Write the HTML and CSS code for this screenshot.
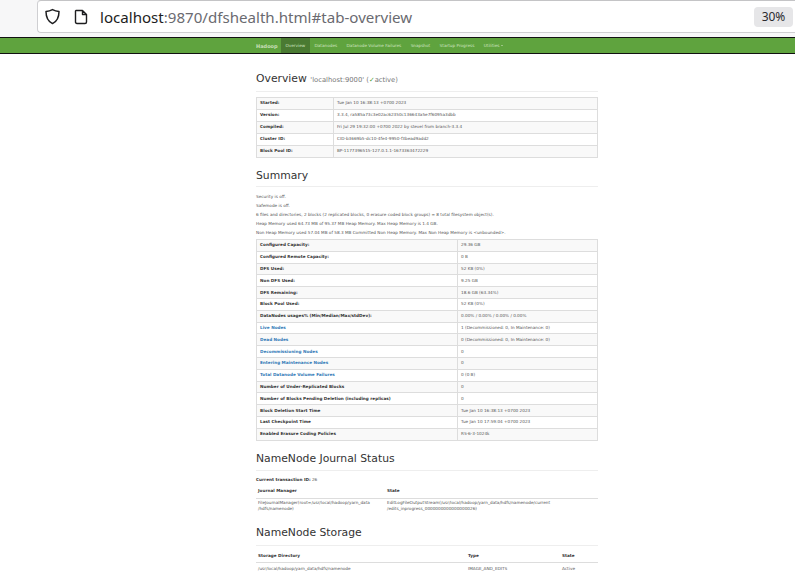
FILE: index.html
```html
<!DOCTYPE html>
<html lang="en">
<head>
  <meta charset="UTF-8">
  <title>Namenode information</title>
  <link rel="stylesheet" href="styles.css">
</head>
<body>

  <!-- BROWSER ADDRESS BAR -->
  <div class="browser-bar">
    <div class="url-box">
      <svg class="shield" width="17" height="17" viewBox="0 0 17 17"><path d="M8.5 1.6 C6.4 2.8 4.2 3.3 2 3.4 C2 9 3.4 13 8.5 15.6 C13.6 13 15 9 15 3.4 C12.8 3.3 10.6 2.8 8.5 1.6 Z" fill="none" stroke="#1d1d1f" stroke-width="1.5" stroke-linejoin="round"/></svg>
      <svg class="page" width="14" height="16" viewBox="0 0 14 16"><path d="M2 1.5 H8.5 L12.5 5.5 V13 Q12.5 14.5 11 14.5 H3 Q1.5 14.5 1.5 13 V2 Z M8.5 1.5 V5.5 H12.5" fill="none" stroke="#1d1d1f" stroke-width="1.4" stroke-linejoin="round"/></svg>
      <div class="url"><span class="host">localhost</span>:9870/dfshealth.html#tab-overview</div>
      <div class="zoom-badge">30%</div>
    </div>
  </div>

  <!-- NAVBAR -->
  <div class="navbar">
    <div class="nav-inner">
      <span class="brand">Hadoop</span>
      <a class="nav-link active">Overview</a>
      <a class="nav-link">Datanodes</a>
      <a class="nav-link">Datanode Volume Failures</a>
      <a class="nav-link">Snapshot</a>
      <a class="nav-link">Startup Progress</a>
      <a class="nav-link">Utilities <span class="caret"></span></a>
    </div>
  </div>

  <div class="container">

    <div class="page-header overview-head">
      <h1>Overview <small>'localhost:9000' (<span class="check">&#10003;</span>active)</small></h1>
    </div>
    <table class="grid overview">
      <tr><th>Started:</th><td>Tue Jan 10 16:38:13 +0700 2023</td></tr>
      <tr><th>Version:</th><td>3.3.4, ra585a73c3e02ac62350c136643a5e7f6095a3dbb</td></tr>
      <tr><th>Compiled:</th><td>Fri Jul 29 19:32:00 +0700 2022 by stevel from branch-3.3.4</td></tr>
      <tr><th>Cluster ID:</th><td>CID-b3669b5-dc10-4fe4-9950-f3bead9add2</td></tr>
      <tr><th>Block Pool ID:</th><td>BP-1177396515-127.0.1.1-1673363472229</td></tr>
    </table>

    <div class="page-header summary-head">
      <h1>Summary</h1>
    </div>
    <p>Security is off.</p>
    <p>Safemode is off.</p>
    <p>6 files and directories, 2 blocks (2 replicated blocks, 0 erasure coded block groups) = 8 total filesystem object(s).</p>
    <p>Heap Memory used 64.73 MB of 95.37 MB Heap Memory. Max Heap Memory is 1.4 GB.</p>
    <p>Non Heap Memory used 57.04 MB of 58.3 MB Committed Non Heap Memory. Max Non Heap Memory is &lt;unbounded&gt;.</p>
    <table class="grid summary">
      <tr><th>Configured Capacity:</th><td>29.36 GB</td></tr>
      <tr><th>Configured Remote Capacity:</th><td>0 B</td></tr>
      <tr><th>DFS Used:</th><td>52 KB (0%)</td></tr>
      <tr><th>Non DFS Used:</th><td>9.25 GB</td></tr>
      <tr><th>DFS Remaining:</th><td>18.6 GB (63.34%)</td></tr>
      <tr><th>Block Pool Used:</th><td>52 KB (0%)</td></tr>
      <tr><th>DataNodes usages% (Min/Median/Max/stdDev):</th><td>0.00% / 0.00% / 0.00% / 0.00%</td></tr>
      <tr><th><a>Live Nodes</a></th><td>1 (Decommissioned: 0, In Maintenance: 0)</td></tr>
      <tr><th><a>Dead Nodes</a></th><td>0 (Decommissioned: 0, In Maintenance: 0)</td></tr>
      <tr><th><a>Decommissioning Nodes</a></th><td>0</td></tr>
      <tr><th><a>Entering Maintenance Nodes</a></th><td>0</td></tr>
      <tr><th><a>Total Datanode Volume Failures</a></th><td>0 (0 B)</td></tr>
      <tr><th>Number of Under-Replicated Blocks</th><td>0</td></tr>
      <tr><th>Number of Blocks Pending Deletion (including replicas)</th><td>0</td></tr>
      <tr><th>Block Deletion Start Time</th><td>Tue Jan 10 16:38:13 +0700 2023</td></tr>
      <tr><th>Last Checkpoint Time</th><td>Tue Jan 10 17:59:04 +0700 2023</td></tr>
      <tr><th>Enabled Erasure Coding Policies</th><td>RS-6-3-1024k</td></tr>
    </table>

    <div class="page-header journal-head">
      <h1>NameNode Journal Status</h1>
    </div>
    <p class="txid"><b>Current transaction ID:</b> 26</p>
    <table class="plain journal">
      <tr><th>Journal Manager</th><th>State</th></tr>
      <tr>
        <td>FileJournalManager(root=/usr/local/hadoop/yarn_data<br>/hdfs/namenode)</td>
        <td>EditLogFileOutputStream(/usr/local/hadoop/yarn_data/hdfs/namenode/current<br>/edits_inprogress_0000000000000000026)</td>
      </tr>
    </table>

    <div class="page-header storage-head">
      <h1>NameNode Storage</h1>
    </div>
    <table class="plain storage">
      <tr><th>Storage Directory</th><th>Type</th><th>State</th></tr>
      <tr><td>/usr/local/hadoop/yarn_data/hdfs/namenode</td><td>IMAGE_AND_EDITS</td><td>Active</td></tr>
    </table>

  </div>
</body>
</html>
```

FILE: styles.css
```css
/* page is a 30% zoomed bootstrap layout, so everything is tiny */
html, body {
  height: 100%;
}

body {
  margin: 0;
  background: #fff;
  color: #555;
  font-family: "DejaVu Sans", sans-serif;
  font-size: 4.2px;
  line-height: 6px;
  overflow: hidden;
}

/* BROWSER BAR */
.browser-bar {
  height: 37px;
  padding-left: 37px;
  background: #f7f7f8;
  box-sizing: border-box;
}

.url-box {
  height: 33px;
  display: flex;
  align-items: center;
  background: #fff;
  border: 1px solid #cfcfd2;
  border-top-color: #c4c4c6;
  border-right: 0;
  border-radius: 4px 0 0 4px;
  box-sizing: border-box;
}

.shield {
  margin-left: 6px;
}

.page {
  margin-left: 13px;
}

.url {
  margin-left: 12px;
  font-family: "Noto Sans", sans-serif;
  font-size: 15.1px;
  line-height: 20px;
  color: #6a6a70;
  flex: 1;
}

.host {
  color: #1d1d22;
}

.zoom-badge {
  width: 39px;
  height: 20px;
  margin-right: 2px;
  border-radius: 4px;
  background: #e6e6e8;
  color: #2a2a2e;
  font-family: "Noto Sans", sans-serif;
  font-size: 12px;
  line-height: 20px;
  text-align: center;
}

/* NAVBAR */
.navbar {
  height: 17px;
  background: #5fa33e;
  border-top: 1px solid #111;
  border-bottom: 1px solid #111;
  box-sizing: border-box;
}

.nav-inner {
  display: flex;
  height: 15px;
  margin-left: 256px;
  align-items: center;
}

.brand {
  width: 24.8px;
  color: #c9dfba;
  font-size: 5px;
  font-weight: bold;
}

.nav-link {
  display: block;
  padding: 0 4.7px;
  line-height: 15px;
  color: #cfe3c0;
  font-size: 4.2px;
}

.nav-link.active {
  background: #4a7a32;
}

.caret {
  display: inline-block;
  border-top: 1px solid #d5e6c8;
  border-left: 1px solid transparent;
  border-right: 1px solid transparent;
  vertical-align: middle;
}

/* CONTENT */
.container {
  width: 342px;
  margin-left: 256px;
}

.page-header {
  padding-bottom: 4px;
  margin: 11px 0 6px;
  border-bottom: 1px solid #eee;
}

h1 {
  margin: 0;
  font-size: 10.8px;
  font-weight: normal;
  line-height: 14px;
  color: #333;
}

small {
  font-size: 6.8px;
  color: #777;
}

.check {
  color: #3c9a2c;
  font-weight: bold;
}

.overview-head {
  margin-top: 18px;
  margin-bottom: 5px;
  padding-bottom: 4px;
}

.summary-head {
  margin-top: 11px;
  margin-bottom: 7px;
  padding-bottom: 3px;
}

.storage-head {
  margin-top: 12px;
  padding-bottom: 5px;
}

p {
  margin: 0 0 3px;
}

b, th {
  color: #333;
}

.grid {
  width: 100%;
  border-collapse: collapse;
  border: 1px solid #ddd;
}

.grid th, .grid td {
  border: 1px solid #ddd;
  padding: 0 3px;
  height: 12px;
  text-align: left;
  box-sizing: border-box;
}

.overview th, .overview td {
  padding-bottom: 1px;
}

.summary th, .summary td {
  height: 11.8px;
}

.grid tr:nth-child(odd) {
  background: #f9f9f9;
}

.overview th {
  width: 77px;
}

.summary th {
  width: 201px;
}

a {
  color: #337ab7;
}

.plain {
  width: 100%;
  border-collapse: collapse;
}

.plain th {
  padding: 2px 2px 4px;
  text-align: left;
  border-bottom: 1px solid #ddd;
}

.plain td {
  padding: 1px 2px 2px;
  vertical-align: top;
}

.journal th:first-child {
  width: 125px;
}

.storage th {
  padding: 1px 2px 3px;
}

.storage td {
  padding-top: 3px;
}

.storage th:first-child {
  width: 206px;
}

.storage th:nth-child(2) {
  width: 90px;
}
```
